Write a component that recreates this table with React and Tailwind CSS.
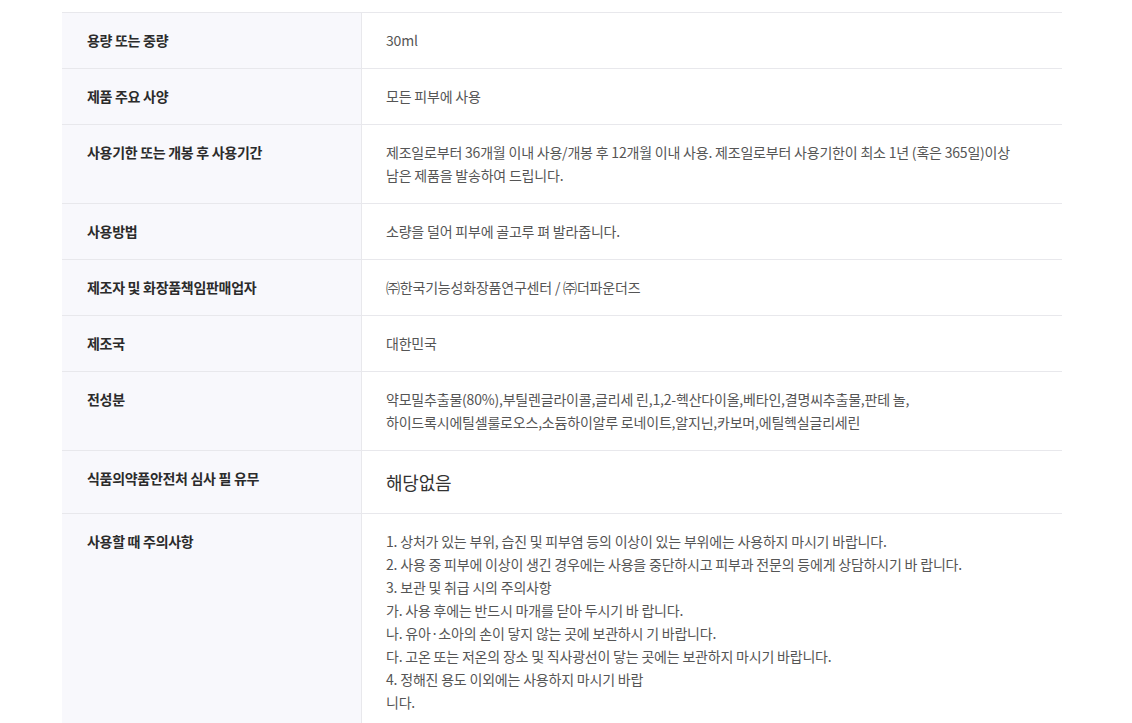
const rows = [
  { label: '용량 또는 중량', value: ['30ml'] },
  { label: '제품 주요 사양', value: ['모든 피부에 사용'] },
  {
    label: '사용기한 또는 개봉 후 사용기간',
    value: [
      '제조일로부터 36개월 이내 사용/개봉 후 12개월 이내 사용. 제조일로부터 사용기한이 최소 1년 (혹은 365일)이상',
      '남은 제품을 발송하여 드립니다.',
    ],
  },
  { label: '사용방법', value: ['소량을 덜어 피부에 골고루 펴 발라줍니다.'] },
  { label: '제조자 및 화장품책임판매업자', value: ['㈜한국기능성화장품연구센터 / ㈜더파운더즈'] },
  { label: '제조국', value: ['대한민국'] },
  {
    label: '전성분',
    value: [
      '약모밀추출물(80%),부틸렌글라이콜,글리세 린,1,2-헥산다이올,베타인,결명씨추출물,판테 놀,',
      '하이드록시에틸셀룰로오스,소듐하이알루 로네이트,알지닌,카보머,에틸헥실글리세린',
    ],
  },
  { label: '식품의약품안전처 심사 필 유무', value: ['해당없음'], big: true },
  {
    label: '사용할 때 주의사항',
    value: [
      '1. 상처가 있는 부위, 습진 및 피부염 등의 이상이 있는 부위에는 사용하지 마시기 바랍니다.',
      '2. 사용 중 피부에 이상이 생긴 경우에는 사용을 중단하시고 피부과 전문의 등에게 상담하시기 바 랍니다.',
      '3. 보관 및 취급 시의 주의사항',
      '가. 사용 후에는 반드시 마개를 닫아 두시기 바 랍니다.',
      '나. 유아·소아의 손이 닿지 않는 곳에 보관하시 기 바랍니다.',
      '다. 고온 또는 저온의 장소 및 직사광선이 닿는 곳에는 보관하지 마시기 바랍니다.',
      '4. 정해진 용도 이외에는 사용하지 마시기 바랍',
      '니다.',
    ],
  },
]

const App = () => {
  return (
    <div className="min-h-screen bg-white pt-3 font-['Noto_Sans_CJK_KR','Noto_Sans',sans-serif]">
      <div className="ml-[62px] w-[1000px] border-t border-[#e8e8ec]">
        {rows.map((row) => (
          <div key={row.label} className="flex border-b border-[#e8e8ec]">
            <div className="w-[300px] shrink-0 border-r border-[#e8e8ec] bg-[#f8f8fc] px-[25px] py-4 text-[14px] leading-[23px] font-bold tracking-[-0.3px] text-[#2b2b2b]">
              {row.label}
            </div>
            <div className="min-w-0 flex-1 py-4 pr-6 pl-[24px] text-[14px] leading-[23px] tracking-[-0.2px] text-[#555]">
              {row.big ? (
                <p className="text-[18px] leading-[30px] text-[#333]">{row.value[0]}</p>
              ) : (
                row.value.map((line, i) => (
                  <p key={i} className="whitespace-nowrap">
                    {line}
                  </p>
                ))
              )}
            </div>
          </div>
        ))}
      </div>
    </div>
  )
}

export default App
